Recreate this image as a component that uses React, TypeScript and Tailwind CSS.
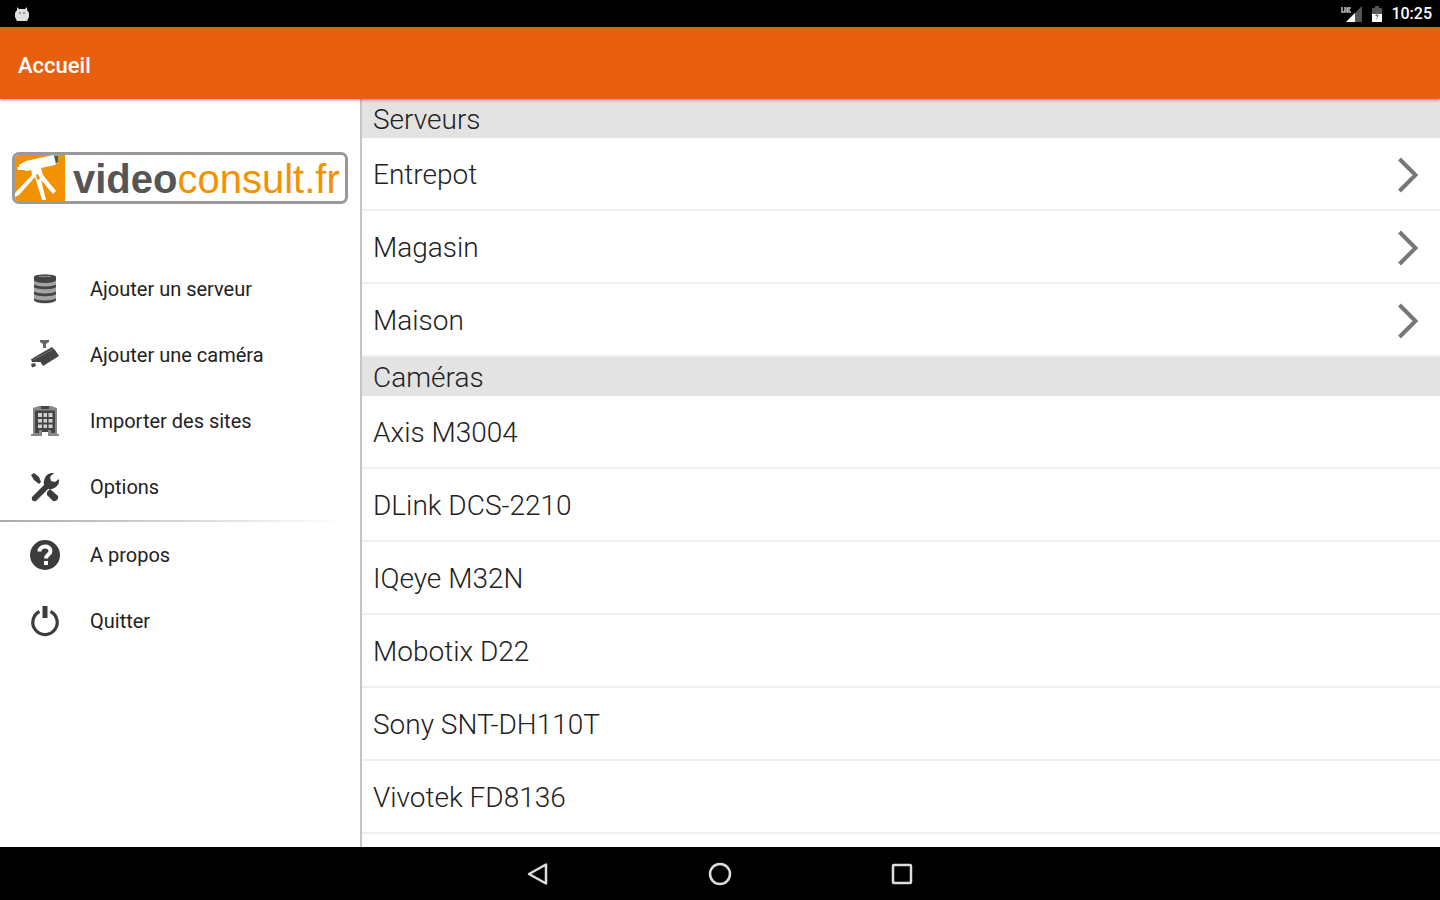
import type { ReactNode } from 'react';

const servers = ['Entrepot', 'Magasin', 'Maison'];
const cameras = ['Axis M3004', 'DLink DCS-2210', 'IQeye M32N', 'Mobotix D22', 'Sony SNT-DH110T', 'Vivotek FD8136'];

function ServerIcon() {
  return (
    <svg viewBox="0 0 30 32" className="w-[30px] h-8" fill="#444">
      <path d="M4 4.500C4 .500 26 .500 26 4.500V27C26 31.500 4 31.500 4 27Z" fill="#a3a3a3" />
      <path d="M4 4C4 .800 26 .800 26 4V7C26 11 4 11 4 7Z" />
      <path d="M4 11.500C8 14 22 14 26 11.500V14C24 17 6 17 4 14Z" />
      <path d="M4 18.500C8 21 22 21 26 18.500V21C24 24 6 24 4 21Z" />
      <path d="M4 25.500C8 28 22 28 26 25.500V27C24 31 6 31 4 27Z" />
      <path d="M9 3.500H21" stroke="#888" strokeWidth="1.200" />
    </svg>
  );
}

function CameraIcon() {
  return (
    <svg viewBox="0 0 30 32" className="w-[30px] h-8" fill="#444">
      <path d="M10 1H19V3L16 5V9H13V5L10 3Z" fill="#666" />
      <path d="M3 19L22 8L25 11L29 17L13 27L10 22L3 22Z" />
      <path d="M1 20L10 17.500L12 23L2 23Z" />
      <path d="M1 25L5 24L6 27L2 28.500Z" />
      <path d="M4 20.500L23 10" stroke="#777" />
    </svg>
  );
}

function BuildingIcon() {
  return (
    <svg viewBox="0 0 30 32" className="w-[30px] h-8" fill="#444">
      <path d="M3 3L9 1H21L27 3V29H29V31H18V27H12V31H1V29H3Z" fill="#888" />
      <path d="M11 1H19V4H11Z" />
      <path d="M5 5.500H25V28H21V25H18V27H12V25H9V28H5Z" />
      <path d="M8 8H12V12H8ZM13.500 8H17V12H13.500ZM18.500 8H22.500V12H18.500ZM8 14H12V17.500H8ZM13.500 14H17V17.500H13.500ZM18.500 14H22.500V17.500H18.500ZM8 19.500H12V23H8ZM13.500 19.500H17V23H13.500ZM18.500 19.500H22.500V23H18.500Z" fill="#d0d0d0" />
    </svg>
  );
}

function ToolsIcon() {
  return (
    <svg viewBox="0 0 30 32" className="w-[30px] h-8" fill="#3c3c3c">
      <path d="M1 4L4 2L9 6L11 11L9 13L4 9Z" />
      <path d="M17 21L20 18L28 25C29 28 26 31 23 30L17 24Z" />
      <path d="M2 26L14 14C13 7 17 1 24 2L20 6L21 10L25 11L29 8C30 14 25 19 18 18L6 30C3 31 1 29 2 26Z" />
    </svg>
  );
}

function AboutIcon() {
  return (
    <svg viewBox="0 0 30 32" className="w-[30px] h-8" fill="none">
      <circle cx="15" cy="16" r="15" fill="#3c3c3c" />
      <path d="M9.500 12.500C9.500 6 20.500 6 20.500 12C20.500 15.500 16 15.500 16 19.500" stroke="#fff" strokeWidth="4" />
      <path d="M14 22H18V26H14Z" fill="#fff" />
    </svg>
  );
}

function PowerIcon() {
  return (
    <svg viewBox="0 0 30 32" className="w-[30px] h-8" fill="none" stroke="#3c3c3c">
      <path d="M9.500 6.500A12.200 12.200 0 1 0 20.500 6.500" strokeWidth="3.200" />
      <path d="M15 1V13" strokeWidth="5" />
    </svg>
  );
}

function Logo() {
  return (
    <div className="flex h-[52px] mx-3 items-center overflow-hidden rounded-[7px] border-[3px] border-[#999] bg-white">
      <svg viewBox="0 0 50 46" className="h-[46px] w-[50px] shrink-0">
        <rect width="50" height="46" fill="#f39200" />
        <g fill="#fff">
          <path d="M4 10L11 6L38 0L43 3V8L40 10L12 16L5 14Z" />
          <path d="M2 12H9V15H3Z" />
          <path d="M16 13H26L28 20L41 36L38 39L26 25L31 45H27L20 22L4 40L0 42V38L17 20Z" />
        </g>
        <path d="M39 1L43 1V7L41 9Z" fill="#555" />
        <path d="M21 20L23 19L25 24L22 25Z" fill="#f39200" />
      </svg>
      <div className="ml-2 pt-0.5 font-['Liberation_Sans',sans-serif] text-[40px] leading-[46px] whitespace-nowrap">
        <span className="font-bold text-[#555]">video</span>
        <span className="text-[#f39200]">consult.fr</span>
      </div>
    </div>
  );
}

function MenuItem({ icon, label }: { icon: ReactNode; label: string }) {
  return (
    <button className="flex h-[66px] w-full items-center gap-[30px] pl-[30px] text-left text-[20px] text-[#222]">
      {icon}
      {label}
    </button>
  );
}

function SectionTitle({ children }: { children: ReactNode }) {
  return <h2 className="flex h-[39px] items-center bg-[#e3e3e3] pt-0.5 pl-[11px] text-[28px] font-light">{children}</h2>;
}

function Row({ label, arrow }: { label: string; arrow?: boolean }) {
  return (
    <li>
      <button className="flex h-[73px] w-full items-center justify-between border-b-2 border-[#f0f0f0] pt-0.5 pl-[11px] pr-[21px] text-left text-[28px] font-light">
        {label}
        {arrow && (
          <svg viewBox="0 0 22 36" className="h-9 w-[22px]" fill="none" stroke="#777" strokeWidth="4">
            <path d="M2.500 2L18.500 18L2.500 34" />
          </svg>
        )}
      </button>
    </li>
  );
}

export default function App() {
  return (
    <div className="flex h-screen flex-col overflow-hidden bg-white font-['Roboto',sans-serif] text-[#222]">
      {/* Status bar */}
      <div className="flex h-[27px] shrink-0 items-center justify-between bg-black pl-[14px] pr-2 text-white">
        <svg viewBox="0 0 16 16" className="size-4" fill="#e0e0e0">
          <path d="M3 1L5 3H11L13 1V4L15 7V11L13 15H3L1 11V7L3 4Z" />
          <path d="M5 6H7V8H5ZM9 6H11V8H9Z" fill="#999" />
        </svg>
        <div className="flex items-center gap-2">
          <svg viewBox="0 0 22 18" className="h-[18px] w-[22px]">
            <path d="M21 1V17H5Z" fill="#555" />
            <path d="M14 8V17H5Z" fill="#fff" />
            <path d="M1 2V7H4V2M10 3H6V7H10M6 5H9" fill="none" stroke="#bbb" strokeWidth="1.500" />
          </svg>
          <svg viewBox="0 0 12 18" className="h-[18px] w-3">
            <path d="M4 1H8V3H11V17H1V3H4Z" fill="#555" />
            <path d="M1 9H11V17H1Z" fill="#fff" />
            <path d="M7 6L4 11H6L5 15L8 10H6Z" fill="#777" />
          </svg>
          <span className="text-[16px] leading-5 font-medium">10:25</span>
        </div>
      </div>

      <header className="z-10 flex h-[72px] shrink-0 items-center bg-[#e8600f] pl-[18px] pt-1 shadow-[0_1px_3px_rgba(0,0,0,0.4)]">
        <h1 className="text-[22px] font-medium text-white">Accueil</h1>
      </header>

      <div className="flex min-h-0 flex-1">
        <nav className="w-1/4 shrink-0 pt-[53px]">
          <Logo />
          <div className="mt-[52px]">
            <MenuItem icon={<ServerIcon />} label="Ajouter un serveur" />
            <MenuItem icon={<CameraIcon />} label="Ajouter une caméra" />
            <MenuItem icon={<BuildingIcon />} label="Importer des sites" />
            <MenuItem icon={<ToolsIcon />} label="Options" />
            <div className="h-0.5 bg-linear-to-r from-[#aaa] to-white to-95%" />
            <MenuItem icon={<AboutIcon />} label="A propos" />
            <MenuItem icon={<PowerIcon />} label="Quitter" />
          </div>
        </nav>

        <main className="min-w-0 flex-1 overflow-hidden border-l-2 border-[#c4c4c4]">
          <SectionTitle>Serveurs</SectionTitle>
          <ul>
            {servers.map(s => <Row key={s} label={s} arrow />)}
          </ul>
          <SectionTitle>Caméras</SectionTitle>
          <ul>
            {cameras.map(c => <Row key={c} label={c} />)}
          </ul>
        </main>
      </div>

      {/* Navigation bar */}
      <div className="flex h-[53px] shrink-0 items-center justify-center gap-[158px] bg-black">
        <button aria-label="Retour">
          <svg viewBox="0 0 24 24" className="size-6" fill="none" stroke="#ddd" strokeWidth="2.500">
            <path d="M20 2.500V21.500L3 12Z" strokeLinejoin="round" />
          </svg>
        </button>
        <button aria-label="Accueil">
          <svg viewBox="0 0 24 24" className="size-6" fill="none" stroke="#ddd" strokeWidth="2.500">
            <circle cx="12" cy="12" r="10" />
          </svg>
        </button>
        <button aria-label="Applications récentes">
          <svg viewBox="0 0 24 24" className="size-6" fill="none" stroke="#ddd" strokeWidth="2.500">
            <rect x="3" y="3" width="18" height="18" rx="1" />
          </svg>
        </button>
      </div>
    </div>
  );
}
